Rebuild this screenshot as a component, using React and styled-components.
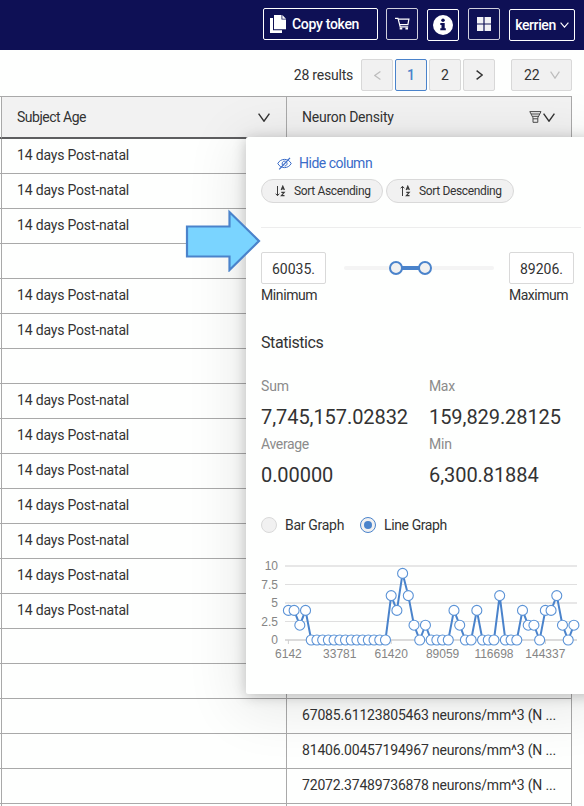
import React from "react";
import styled, { createGlobalStyle } from "styled-components";

const GlobalStyle = createGlobalStyle`
  *, *::before, *::after { box-sizing: border-box; }
  body {
    margin: 0;
    background: #fefffe;
    color: #333;
    font-family: Roboto, sans-serif;
    font-size: 14px;
    line-height: 20px;
    overflow: hidden;
  }
  button, input { font: inherit; color: inherit; margin: 0; }
`;

const Page = styled.div`
  width: 584px;
  height: 806px;
  overflow: hidden;
`;

const Text = styled.span`
  letter-spacing: ${(p) => p.$track || 0}px;
  white-space: nowrap;
`;

/* ---------- top bar ---------- */

const TopBar = styled.header`
  display: flex;
  align-items: flex-start;
  justify-content: flex-end;
  gap: 9px;
  height: 50px;
  padding: 8px 9px 0 0;
  background: #0e1055;
  color: #fff;
`;

const BarButton = styled.button`
  display: flex;
  align-items: center;
  justify-content: ${(p) => p.$align || "center"};
  gap: ${(p) => p.$gap || 0}px;
  width: ${(p) => p.$width || 32}px;
  height: 32px;
  margin-top: ${(p) => (p.$low ? 1 : 0)}px;
  padding: 0 0 0 ${(p) => p.$pad || 0}px;
  background: transparent;
  border: 1px solid ${(p) => (p.$dim ? "#cfcfdd" : "#fff")};
  border-radius: 2px;
  font-weight: ${(p) => p.$weight || 400};
`;

const CopyButton = styled(BarButton)`
  margin-right: -1px;
`;

/* ---------- pagination ---------- */

const Toolbar = styled.nav`
  display: flex;
  align-items: center;
  justify-content: flex-end;
  gap: 2px;
  height: 46px;
  padding: 4px 12px 0 0;
`;

const ResultCount = styled.div`
  margin-right: 6px;
  padding-bottom: 1px;
`;

const PageButton = styled.button`
  display: flex;
  align-items: center;
  justify-content: center;
  width: 32px;
  height: 32px;
  padding: 0;
  background: #f1f1f1;
  border: 1px solid ${(p) => (p.$active ? "#4a83cb" : "#d8d8d8")};
  border-radius: 2px;
  color: ${(p) => (p.$active ? "#4a83cb" : p.$disabled ? "#bdbdbd" : "#333")};
  font-weight: ${(p) => (p.$active ? 500 : 400)};
`;

const PageSize = styled(PageButton)`
  width: 61px;
  margin-left: 14px;
  padding: 0 11px 0 12px;
  justify-content: space-between;
`;

/* ---------- table ---------- */

const Grid = styled.main`
  position: relative;
  display: grid;
  grid-template-columns: 287px 285px;
  width: 572px;
`;

const HeadCell = styled.div`
  display: flex;
  align-items: center;
  justify-content: space-between;
  height: 43px;
  padding: 0 16px 0 15px;
  background: #f2f2f2;
  border-top: 1px solid #a9a9a9;
  border-bottom: 2px solid #5e5e60;
  border-right: 1px solid #a9a9a9;
  ${(p) => p.$first && "border-left: 1px solid #a9a9a9;"}
`;

const Gutter = styled.div`
  padding-left: 1px;
  background:
    linear-gradient(#a9a9a9, #a9a9a9) 0 0 / 1px ${(p) => (p.$head ? 1 : 0)}px no-repeat,
    linear-gradient(${(p) => (p.$head ? "#5e5e60, #5e5e60" : "#a9a9a9, #a9a9a9")}) 0 100% / 1px ${(p) => (p.$head ? 2 : 1)}px no-repeat;
`;

const BodyCell = styled.div`
  height: 35px;
  padding: 6px 0 0 15px;
  border-bottom: 1px solid #a9a9a9;
  border-right: 1px solid #a9a9a9;
  ${(p) => p.$first && "border-left: 1px solid #a9a9a9;"}
`;

const HeadIcons = styled.div`
  display: flex;
  align-items: center;
`;

/* ---------- column menu ---------- */

const Popup = styled.section`
  position: absolute;
  left: 246px;
  top: 41px;
  width: 350px;
  height: 557px;
  padding: 16px 15px 0;
  background: #fefffe;
  border-radius: 2px;
  box-shadow: 0 2px 14px rgba(0, 0, 0, 0.22), 0 9px 56px 8px rgba(0, 0, 0, 0.09);
`;

const HideLink = styled.button`
  display: flex;
  align-items: center;
  gap: 7px;
  height: 20px;
  padding: 0 0 0 16px;
  border: 0;
  background: none;
  color: #3a6cc8;
`;

const Pills = styled.div`
  display: flex;
  gap: 3px;
  margin-top: 6px;
`;

const Pill = styled.button`
  display: flex;
  align-items: center;
  gap: 8px;
  width: ${(p) => p.$width}px;
  height: 24px;
  padding: 0 0 0 13px;
  background: #f1f1f1;
  border: 1px solid #d9d9d9;
  border-radius: 12px;
  font-size: 12px;
`;

const Divider = styled.hr`
  width: 320px;
  height: 1px;
  margin: 24px 0;
  border: 0;
  background: #ededed;
`;

const RangeRow = styled.div`
  display: flex;
  width: 313px;
  height: 53px;
`;

const Bound = styled.label`
  display: flex;
  flex-direction: column;
  width: 65px;
`;

const BoundInput = styled.input`
  width: 65px;
  height: 32px;
  padding: 2px 10px 0 10px;
  margin-bottom: 1px;
  background: #fff;
  border: 1px solid #d9d9d9;
  border-radius: 2px;
`;

const Rail = styled.div`
  position: relative;
  width: 150px;
  height: 4px;
  margin: 14px 15px 0 18px;
  border-radius: 2px;
  background: #f4f4f4;
`;

const RailSpan = styled.div`
  width: 29px;
  height: 4px;
  margin-left: 52px;
  background: #4a83cb;
`;

const Handle = styled.span`
  position: absolute;
  top: -5px;
  left: ${(p) => p.$at - 7}px;
  width: 14px;
  height: 14px;
  border: 2px solid #4a83cb;
  border-radius: 50%;
  background: #f1f1f1;
`;

const Heading = styled.h3`
  margin: 28px 0 23px;
  height: 20px;
  font-size: 16px;
  font-weight: 400;
`;

const Stats = styled.dl`
  display: grid;
  grid-template-columns: 168px 150px;
  margin: 0;
`;

const Stat = styled.div`
  height: 58px;
`;

const StatName = styled.dt`
  color: #8b8b8b;
`;

const StatValue = styled.dd`
  margin: 8px 0 0;
  height: 26px;
  font-size: 20px;
  line-height: 26px;
  letter-spacing: -0.07px;
`;

const Radios = styled.div`
  display: flex;
  gap: 16px;
  margin-top: 23px;
`;

const Radio = styled.label`
  display: flex;
  align-items: center;
  gap: 8px;
`;

const Dot = styled.span`
  display: grid;
  place-items: center;
  width: 16px;
  height: 16px;
  border: 1px solid ${(p) => (p.$on ? "#4a83cb" : "#d9d9d9")};
  border-radius: 50%;
  background: #f1f1f1;
  &::after {
    content: "";
    width: 8px;
    height: 8px;
    border-radius: 50%;
    background: ${(p) => (p.$on ? "#4a83cb" : "transparent")};
  }
`;

const ChartSvg = styled.svg`
  display: block;
  margin: 20px 0 0 -15px;
  font: 12px "Liberation Sans", sans-serif;
`;

const Pointer = styled.svg`
  position: absolute;
  left: 184px;
  top: 112px;
`;

/* ---------- icons ---------- */

const Chevron = ({ w = 10, h = 6, dir = "down", sw = 1.2, color = "currentColor" }) => {
  const paths = {
    down: `M.6 .6L${w / 2} ${h - 0.8}L${w - 0.6} .6`,
    left: `M${w - 0.6} .6L.8 ${h / 2}L${w - 0.6} ${h - 0.6}`,
    right: `M.6 .6L${w - 0.8} ${h / 2}L.6 ${h - 0.6}`,
  };
  return (
    <svg width={w} height={h} fill="none" stroke={color} strokeWidth={sw}>
      <path d={paths[dir]} />
    </svg>
  );
};

const CopyIcon = () => (
  <svg width="16" height="18" viewBox="0 0 16 18" fill="#fff">
    <path d="M0 3h3v12.200h9V18H0z" />
    <path d="M4 0h7.500v4.500H16V14.200H4z" />
    <path d="M12.300 0L16 3.700H12.300z" />
  </svg>
);

const CartIcon = () => (
  <svg width="15" height="14" viewBox="0 0 15 14" fill="none" stroke="#fff" strokeWidth="1.200">
    <path d="M0 1.300H3L5.200 9.800H13.200" />
    <path d="M3.400 2.200H13.900L12.900 7.600H4.600" />
    <path d="M4.700 10.600H7.300V12.600H4.700zM10.400 10.600H13V12.600H10.400z" fill="#fff" stroke="none" />
  </svg>
);

const InfoIcon = () => (
  <svg width="20" height="20" viewBox="0 0 20 20">
    <circle cx="10" cy="10" r="10" fill="#fff" />
    <circle cx="10" cy="5.300" r="1.750" fill="#0e1055" />
    <path d="M7.300 8H11.700V13.300H12.800V15.300H7.300V13.300H8.500V10H7.300z" fill="#0e1055" />
  </svg>
);

const TilesIcon = () => (
  <svg width="14" height="14" viewBox="0 0 14 14" fill="#f1f1f6">
    <path d="M0 0h6.400v6.400H0zM7.600 0H14v6.400H7.600zM0 7.600h6.400V14H0zM7.600 7.600H14V14H7.600z" />
  </svg>
);

const FunnelIcon = () => (
  <svg width="14" height="12" viewBox="0 0 14 12" fill="none" stroke="#4a4a4a" strokeWidth="1">
    <path d="M.8 .6H12L8.800 6.800V11.300H4V6.800z" />
    <path d="M2 3H10.800M3.300 5.300H9.500M4 7.800H8.800" />
  </svg>
);

const EyeOffIcon = () => (
  <svg width="15" height="13" viewBox="0 0 15 13" fill="none" stroke="currentColor" strokeWidth="1">
    <path d="M.8 6.500C3.600 1 11.400 1 14.200 6.500C11.400 12 3.600 12 .8 6.500z" />
    <path d="M6 8.600A2.600 2.600 0 0 1 8.600 4.200M9.700 5.200A2.600 2.600 0 0 1 7.600 9.100" />
    <path d="M2.200 12.300L13 .8" strokeWidth="1.200" />
  </svg>
);

const SortIcon = ({ up }) => (
  <svg width="11" height="12" viewBox="0 0 11 12" fill="none" stroke="#3a3a3a" strokeWidth="1">
    <path d={up ? "M2.500 11V1.500M.7 3.300L2.500 1.300L4.300 3.300" : "M2.500 1V10.500M.7 8.700L2.500 10.700L4.300 8.700"} />
    <path d="M6.200 5L7.800 1.200L9.400 5M6.800 3.900H8.800" strokeWidth="1.200" />
    <path d="M6.300 7.300H9.200L6.400 10.700H9.500" strokeWidth="1.200" />
  </svg>
);

/* ---------- chart ---------- */

const series = [
  4, 4, 2, 4, 0, 0, 0, 0, 0, 0, 0, 0, 0, 0, 0, 0, 0, 0, 6, 4, 9, 6, 2, 0, 2, 0,
  0, 0, 0, 4, 2, 0, 0, 4, 0, 0, 0, 6, 0, 0, 0, 4, 2, 2, 0, 4, 4, 6, 2, 0, 2,
];
const xLabels = ["6142", "33781", "61420", "89059", "116698", "144337"];
const px = (i) => 42.4 + i * 5.71;
const py = (v) => 85 - v * 7.4;

const Chart = () => (
  <ChartSvg width="350" height="120">
    {[0, 2.5, 5, 7.5, 10].map((v) => (
      <g key={v}>
        <line x1="39" x2="331" y1={py(v)} y2={py(v)} stroke={v === 0 ? "#cfcfcf" : "#dfdfdf"} strokeWidth={v === 2.5 || v === 7.5 ? 1 : 1.6} />
        <text x="32" y={py(v) + 4} textAnchor="end" fill="#858585">{v}</text>
      </g>
    ))}
    {xLabels.map((t, i) => (
      <g key={t}>
        <line x1={px(i * 9)} x2={px(i * 9)} y1="85" y2="89" stroke="#cfcfcf" />
        <text x={px(i * 9)} y="103" textAnchor="middle" fill="#858585">{t}</text>
      </g>
    ))}
    <polyline points={series.map((v, i) => `${px(i)},${py(v)}`).join(" ")} fill="none" stroke="#4a83cb" strokeWidth="2" />
    {series.map((v, i) => (
      <circle key={i} cx={px(i)} cy={py(v)} r="5" fill="#fff" stroke="#5b93d6" strokeWidth="1.100" />
    ))}
  </ChartSvg>
);

/* ---------- data ---------- */

const age = "14 days Post-natal";
const rows = [
  [age], [age], [age], [], [age], [age], [], [age], [age], [age],
  [age], [age], [age], [age], [], [],
  [null, "67085.61123805463 neurons/mm^3 (N ..."],
  [null, "81406.00457194967 neurons/mm^3 (N ..."],
  [null, "72072.37489736878 neurons/mm^3 (N ..."],
  [],
];

const stats = [
  ["Sum", "7,745,157.02832", -0.15],
  ["Max", "159,829.28125", -0.35],
  ["Average", "0.00000", -0.33],
  ["Min", "6,300.81884", -0.25],
];

const ColumnMenu = () => (
  <Popup>
    <HideLink>
      <EyeOffIcon />
      <Text $track={-0.5}>Hide column</Text>
    </HideLink>
    <Pills>
      <Pill $width={122}><SortIcon /><Text $track={-0.36}>Sort Ascending</Text></Pill>
      <Pill $width={128}><SortIcon up /><Text $track={-0.36}>Sort Descending</Text></Pill>
    </Pills>
    <Divider />
    <RangeRow>
      <Bound>
        <BoundInput defaultValue="60035." />
        <Text $track={-0.4}>Minimum</Text>
      </Bound>
      <Rail>
        <RailSpan />
        <Handle $at={52} />
        <Handle $at={81} />
      </Rail>
      <Bound>
        <BoundInput defaultValue="89206." />
        <Text $track={-0.5}>Maximum</Text>
      </Bound>
    </RangeRow>
    <Heading><Text $track={-0.42}>Statistics</Text></Heading>
    <Stats>
      {stats.map(([name, value, track]) => (
        <Stat key={name}>
          <StatName><Text $track={track}>{name}</Text></StatName>
          <StatValue>{value}</StatValue>
        </Stat>
      ))}
    </Stats>
    <Radios>
      <Radio><Dot /><Text $track={-0.3}>Bar Graph</Text></Radio>
      <Radio><Dot $on /><Text $track={-0.4}>Line Graph</Text></Radio>
    </Radios>
    <Chart />
  </Popup>
);

export default function App() {
  return (
    <Page>
      <GlobalStyle />
      <TopBar>
        <CopyButton $width={115} $align="flex-start" $pad={6} $gap={6} $weight={500}>
          <CopyIcon />
          <Text $track={-0.3}>Copy token</Text>
        </CopyButton>
        <BarButton $dim><CartIcon /></BarButton>
        <BarButton $low><InfoIcon /></BarButton>
        <BarButton $dim><TilesIcon /></BarButton>
        <BarButton $low $width={66} $gap={4} $weight={500}>
          <Text $track={-0.4}>kerrien</Text>
          <Chevron w={9} h={6} sw={1.1} />
        </BarButton>
      </TopBar>
      <Toolbar>
        <ResultCount><Text $track={-0.22}>28 results</Text></ResultCount>
        <PageButton $disabled><Chevron dir="left" w={7} h={9} /></PageButton>
        <PageButton $active>1</PageButton>
        <PageButton>2</PageButton>
        <PageButton><Chevron dir="right" w={7} h={10} sw={1.4} /></PageButton>
        <PageSize>
          22
          <Chevron w={10} h={8} color="#bdbdbd" />
        </PageSize>
      </Toolbar>
      <Grid>
        <Gutter $head>
          <HeadCell $first>
            <Text $track={-0.5}>Subject Age</Text>
            <Chevron w={12} h={9} sw={1.4} />
          </HeadCell>
        </Gutter>
        <HeadCell>
          <Text $track={-0.25}>Neuron Density</Text>
          <HeadIcons><FunnelIcon /><Chevron w={12} h={9} sw={1.4} /></HeadIcons>
        </HeadCell>
        {rows.map(([a, b], i) => (
          <React.Fragment key={i}>
            <Gutter>
              <BodyCell $first>{a && <Text $track={-0.18}>{a}</Text>}</BodyCell>
            </Gutter>
            <BodyCell>{b && <Text $track={-0.17}>{b}</Text>}</BodyCell>
          </React.Fragment>
        ))}
        <ColumnMenu />
        <Pointer width="80" height="64" viewBox="0 0 80 64">
          <path d="M3 18.500H45.500V4L75 33L45.500 62V48.500H3z" fill="#7ad4ff" stroke="#4a83cb" strokeWidth="2.200" />
        </Pointer>
      </Grid>
    </Page>
  );
}
